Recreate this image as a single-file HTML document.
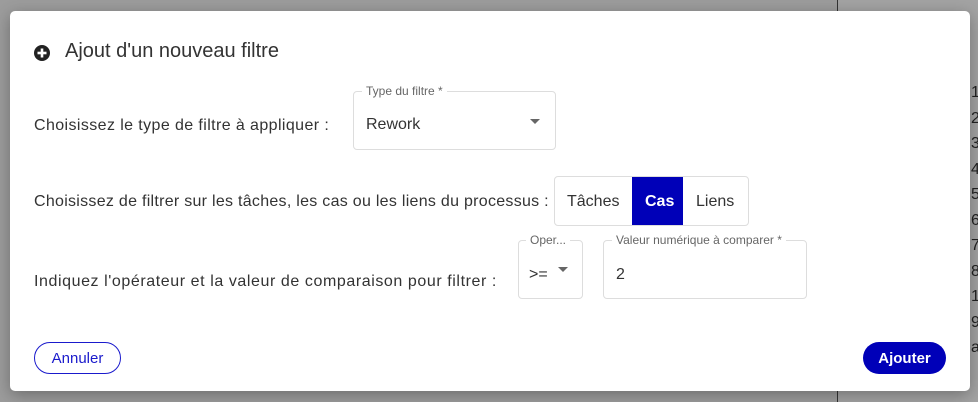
<!DOCTYPE html>
<html><head><meta charset="utf-8"><style>
body{margin:0;width:978px;height:402px;background:#9c9c9c;position:relative;overflow:hidden;font-family:"Liberation Sans",sans-serif;}
.bgr{position:absolute;left:837px;top:0;width:141px;height:402px;background:#a3a3a3;border-left:1px solid #333;}
.nums{position:absolute;left:971px;top:80px;font-size:16px;color:#222;line-height:25.5px}
.dlg{position:absolute;left:10px;top:11px;width:960px;height:380px;background:#fff;border-radius:5px;box-shadow:0 4px 16px rgba(0,0,0,.3);}
.t{position:absolute;color:#333;font-size:16px;white-space:nowrap}
.box{position:absolute;border:1px solid #ddd;border-radius:4px;}
.lg{position:absolute;top:-8px;left:8px;background:#fff;padding:0 4px;font-size:12px;color:#666}
.arr{position:absolute;width:0;height:0;border-left:5px solid transparent;border-right:5px solid transparent;border-top:5px solid #666}
</style></head><body>
<div class="bgr"></div>
<div class="nums">1<br>2<br>3<br>4<br>5<br>6<br>7<br>8<br>1<br>9<br>a</div>
<div class="dlg">
<svg style="position:absolute;left:24px;top:34px" width="16" height="16" viewBox="0 0 16 16"><circle cx="8" cy="8" r="8" fill="#222"/><rect x="3.5" y="6.7" width="9" height="2.6" fill="#fff"/><rect x="6.7" y="3.5" width="2.6" height="9" fill="#fff"/></svg>
<div class="t" style="left:55px;top:29px;font-size:20px">Ajout d'un nouveau filtre</div>
<div class="t" style="left:24px;top:106px;letter-spacing:.4px">Choisissez le type de filtre à appliquer :</div>
<div class="box" style="left:343px;top:80px;width:201px;height:57px"><span class="lg">Type du filtre *</span><span class="t" style="left:12px;top:24px">Rework</span><span class="arr" style="left:176px;top:27px"></span></div>
<div class="t" style="left:24px;top:182px;letter-spacing:.28px">Choisissez de filtrer sur les tâches, les cas ou les liens du processus :</div>
<div class="box" style="left:544px;top:165px;width:193px;height:48px;overflow:hidden">
<span class="t" style="left:12px;top:16px">Tâches</span>
<div style="position:absolute;left:77px;top:0;width:51px;height:48px;background:#0000b8"></div>
<span class="t" style="left:90px;top:16px;color:#fff;font-weight:bold">Cas</span>
<span class="t" style="left:141px;top:16px">Liens</span></div>
<div class="t" style="left:24px;top:262px;letter-spacing:.58px">Indiquez l'opérateur et la valeur de comparaison pour filtrer :</div>
<div class="box" style="left:508px;top:229px;width:63px;height:57px"><span class="lg" style="left:7px">Oper...</span><span class="t" style="left:10px;top:25px">&gt;=</span><span class="arr" style="left:39px;top:26px"></span></div>
<div class="box" style="left:593px;top:229px;width:202px;height:57px"><span class="lg">Valeur numérique à comparer *</span><span class="t" style="left:12px;top:25px">2</span></div>
<div style="position:absolute;left:24px;top:331px;width:85px;height:30px;border:1px solid #1a1acc;border-radius:16px;color:#1a1acc;font-size:15px;text-align:center;line-height:32px">Annuler</div>
<div style="position:absolute;left:853px;top:331px;width:83px;height:32px;background:#0000b8;border-radius:16px;color:#fff;font-weight:bold;font-size:15px;text-align:center;line-height:33px">Ajouter</div>
</div>
</body></html>
